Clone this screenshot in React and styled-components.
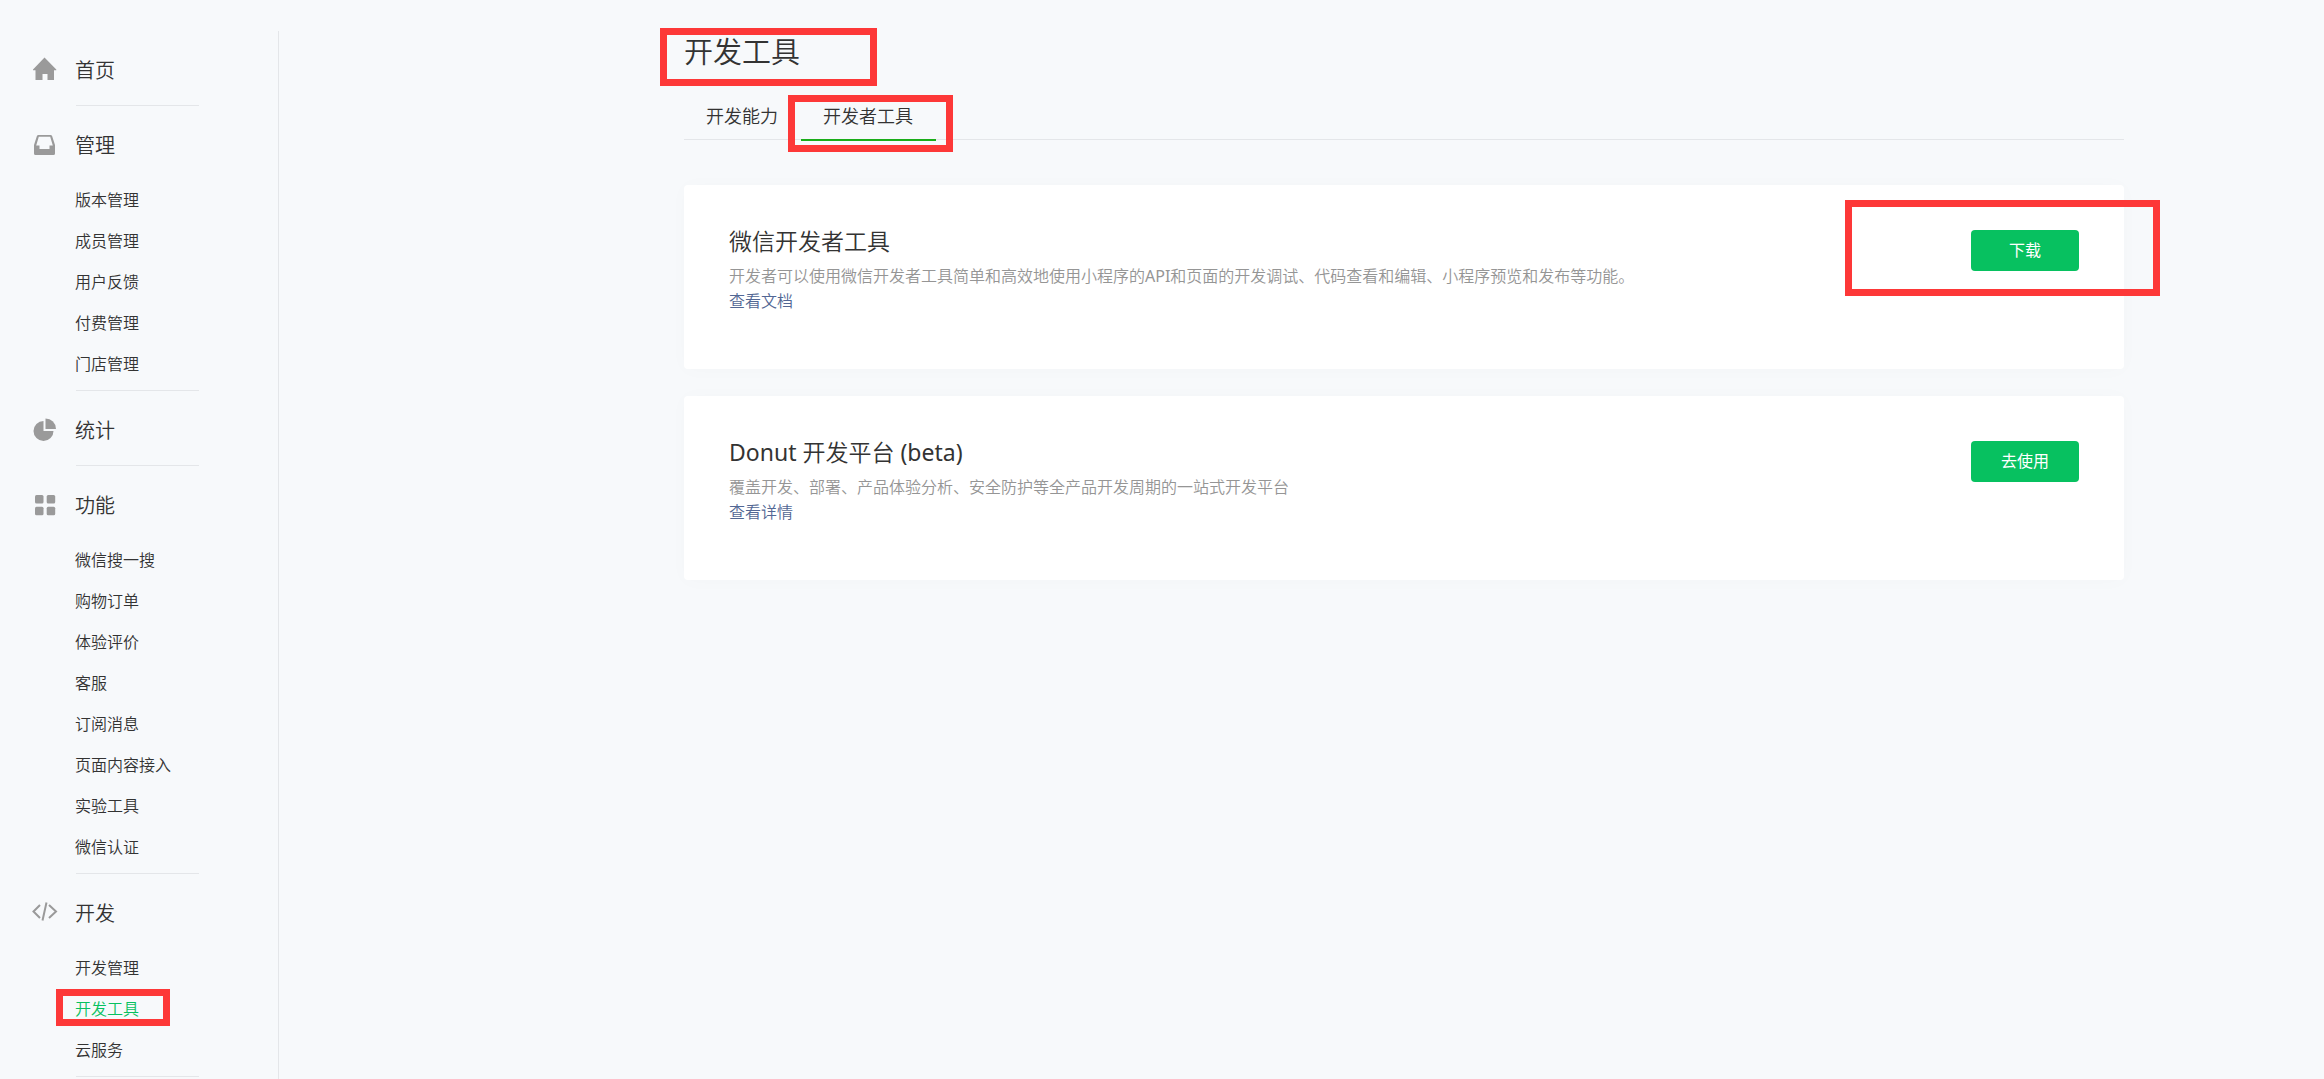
import styled, { createGlobalStyle, css } from 'styled-components';

const menus = [
  { title: '首页', icon: 'home', items: [] },
  { title: '管理', icon: 'inbox', items: ['版本管理', '成员管理', '用户反馈', '付费管理', '门店管理'] },
  { title: '统计', icon: 'chart', items: [] },
  {
    title: '功能',
    icon: 'grid',
    items: ['微信搜一搜', '购物订单', '体验评价', '客服', '订阅消息', '页面内容接入', '实验工具', '微信认证']
  },
  { title: '开发', icon: 'code', items: ['开发管理', '开发工具', '云服务'] }
];

const ACTIVE_ITEM = '开发工具';

const MenuIcon = ({ name }) => (
  <StIcon viewBox="0 0 26 26" aria-hidden="true">
    {name === 'home' && <path d="M12.500.5 24.300 12.500v.7H22V23h-6.500v-6h-5v6H3.500v-9.800H1v-.7z" />}
    {name === 'inbox' && (
      <path
        fillRule="evenodd"
        d="M6.500 3h12q1.200 0 1.600 1.100L23 13v8.500q0 1.500-1.500 1.500H3.500q-1.500 0-1.500-1.500V13L4.900 4.100Q5.300 3 6.500 3zM6.800 4.800 4.200 13.500H7.500v3.500h10v-3.500h3.300L18.200 4.800z"
      />
    )}
    {name === 'chart' && (
      <>
        <path d="M11.500 4v10h10A10 10 0 1 1 11.500 4z" />
        <path d="M13.500 1.500A10.500 10.500 0 0 1 24 12H13.500z" />
      </>
    )}
    {name === 'grid' && (
      <>
        <rect x="3" y="3" width="8.500" height="8.500" rx="1.500" />
        <rect x="14.700" y="3" width="8.500" height="8.500" rx="1.500" />
        <rect x="3" y="14.700" width="8.500" height="8.500" rx="1.500" />
        <rect x="14.700" y="14.700" width="8.500" height="8.500" rx="1.500" />
      </>
    )}
    {name === 'code' && (
      <path d="M8 5 1.500 11.500 8 18M17 5l7 6.500-7 6.500M14.500 2.500 10.500 20.500" fill="none" stroke="#9a9a9a" strokeWidth="2" />
    )}
  </StIcon>
);

const Sidebar = () => (
  <StSidebar>
    {menus.map(({ title, icon, items }) => (
      <StGroup key={title}>
        <StGroupLink href="#">
          <MenuIcon name={icon} />
          {title}
        </StGroupLink>
        {items.length > 0 && (
          <StItems>
            {items.map((item) => (
              <li key={item}>
                <StItemLink href="#" $active={item === ACTIVE_ITEM}>
                  {item}
                </StItemLink>
              </li>
            ))}
          </StItems>
        )}
      </StGroup>
    ))}
  </StSidebar>
);

const ToolCard = ({ title, desc, link, action, marked }) => (
  <StCard>
    <StCardBody>
      <StCardTitle>{title}</StCardTitle>
      <StCardText>{desc}</StCardText>
      <StCardLink href="#">{link}</StCardLink>
    </StCardBody>
    <StCardAction $marked={marked}>
      <StButton type="button">{action}</StButton>
    </StCardAction>
  </StCard>
);

const App = () => (
  <>
    <GlobalStyle />
    <StPage>
      <Sidebar />
      <StMain>
        <StContent>
          <StTitle>开发工具</StTitle>
          <StTabs>
            <StTab href="#">开发能力</StTab>
            <StTab href="#" $active>
              开发者工具
            </StTab>
          </StTabs>
          <StCards>
            <ToolCard
              title="微信开发者工具"
              desc={
                <>
                  开发者可以使用微信开发者工具简单和高效地使用小程序的<StLatin>API</StLatin>
                  和页面的开发调试、代码查看和编辑、小程序预览和发布等功能。
                </>
              }
              link="查看文档"
              action="下载"
              marked
            />
            <ToolCard
              title={
                <>
                  <StLatin>Donut</StLatin> 开发平台 <StLatin>(beta)</StLatin>
                </>
              }
              desc="覆盖开发、部署、产品体验分析、安全防护等全产品开发周期的一站式开发平台"
              link="查看详情"
              action="去使用"
            />
          </StCards>
        </StContent>
      </StMain>
    </StPage>
  </>
);

const colors = {
  bg: '#f7f9fb',
  line: '#e4e6e9',
  text: '#333',
  gray: '#959595',
  link: '#526794',
  icon: '#9a9a9a',
  green: '#07c160',
  tab: '#1aad19',
  mark: '#fd3838'
};

const GlobalStyle = createGlobalStyle`
  * {
    box-sizing: border-box;
  }

  body {
    margin: 0;
    background: ${colors.bg};
    color: ${colors.text};
    font-family: 'Noto Sans', 'Noto Sans CJK SC', sans-serif;
    font-size: 16px;
    font-weight: 350;
  }

  a {
    color: inherit;
    text-decoration: none;
  }
`;

// red frame drawn over a part of the page
const mark = (inset) => css`
  position: relative;

  &::after {
    content: '';
    position: absolute;
    inset: ${inset};
    border: 7px solid ${colors.mark};
    pointer-events: none;
  }
`;

const StPage = styled.div`
  display: flex;
  height: 100vh;
  padding-top: 31px;
  overflow: hidden;
`;

const StSidebar = styled.nav`
  flex: none;
  width: 279px;
  padding-left: 32px;
  border-right: 1px solid ${colors.line};
`;

const StGroup = styled.div`
  &::after {
    content: '';
    display: block;
    width: 123px;
    height: 1px;
    margin-left: 44px;
    background: ${colors.line};
  }
`;

const StGroupLink = styled.a`
  display: flex;
  align-items: center;
  gap: 17px;
  padding: 26px 0 20px;
  font-size: 20px;
  line-height: 28px;
`;

const StIcon = styled.svg`
  flex: none;
  width: 26px;
  height: 26px;
  margin-bottom: 2px;
  fill: ${colors.icon};
`;

const StItems = styled.ul`
  margin: 0;
  padding: 0 0 5px 43px;
  list-style: none;
  line-height: 41px;
`;

const StItemLink = styled.a`
  ${({ $active }) =>
    $active &&
    css`
      color: ${colors.green};
      ${mark('-9px -31px -6px -19px')}
    `}
`;

const StMain = styled.main`
  flex: 1;
  min-width: 0;
  padding: 0 200px 0 40px;
`;

const StContent = styled.div`
  max-width: 1440px;
  margin-left: auto;
`;

const StTitle = styled.h1`
  width: 160px;
  margin: 0 0 22px;
  font-size: 29px;
  font-weight: inherit;
  line-height: 42px;
  ${mark('-3px -33px -13px -24px')}
`;

const StTabs = styled.div`
  display: flex;
  border-bottom: 1px solid ${colors.line};
`;

const StTab = styled.a`
  margin-bottom: -2px;
  padding: 0 23px 2px 22px;
  border-bottom: 2px solid transparent;
  font-size: 18px;
  line-height: 42px;

  ${({ $active }) =>
    $active &&
    css`
      border-color: ${colors.tab};
      ${mark('0 -17px -13px -13px')}
    `}
`;

const StCards = styled.div`
  display: flex;
  flex-direction: column;
  gap: 27px;
  padding-top: 45px;
`;

const StCard = styled.section`
  display: flex;
  justify-content: space-between;
  align-items: flex-start;
  padding: 45px 45px 55px;
  border-radius: 4px;
  background: #fff;
  box-shadow: 0 1px 20px rgba(0, 0, 0, 0.02);
`;

const StCardBody = styled.div`
  line-height: 25px;
`;

const StCardTitle = styled.h2`
  margin: 0 0 12px;
  font-size: 23px;
  font-weight: inherit;
  line-height: 22px;
`;

const StLatin = styled.span`
  font-weight: 400;
`;

const StCardText = styled.p`
  margin: 0;
  color: ${colors.gray};
`;

const StCardLink = styled.a`
  color: ${colors.link};
`;

const StCardAction = styled.div`
  flex: none;
  display: flex;
  ${({ $marked }) => $marked && mark('-30px -81px -25px -126px')}
`;

const StButton = styled.button`
  width: 108px;
  height: 41px;
  padding: 0 0 3px;
  border: 0;
  border-radius: 4px;
  background: ${colors.green};
  color: #fff;
  font: inherit;
  font-weight: 400;
  cursor: pointer;
`;

export default App;
